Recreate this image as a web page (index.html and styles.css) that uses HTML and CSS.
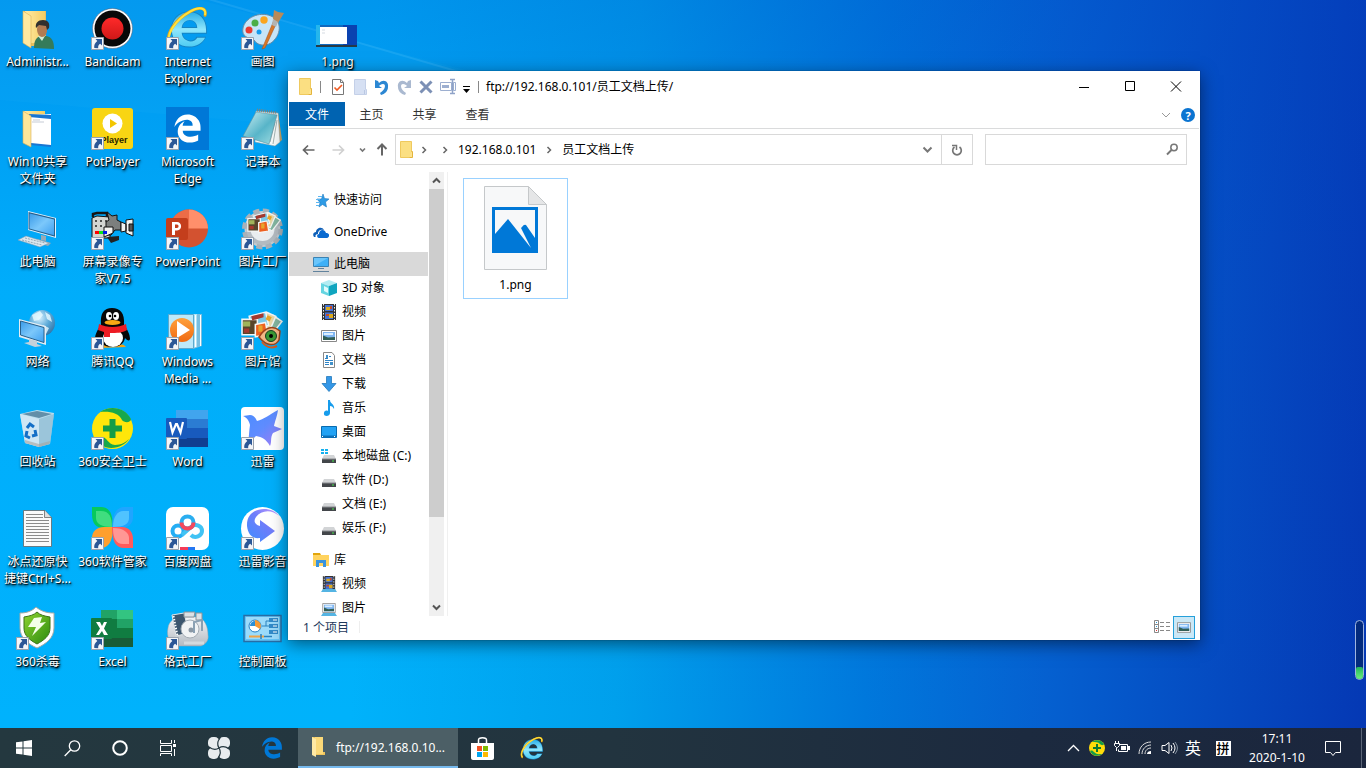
FILE: index.html
```html
<!DOCTYPE html>
<html lang="zh-CN">
<head>
<meta charset="utf-8">
<meta name="viewport" content="width=device-width, initial-scale=1">
<title>ftp://192.168.0.101/员工文档上传/</title>
<link rel="stylesheet" href="styles.css">
</head>
<body>
<svg class="defs" aria-hidden="true">
  <defs>
    <linearGradient id="gFolder" x1="0" x2="1"><stop offset="0" stop-color="#ffeaa4"/><stop offset="1" stop-color="#f5cd62"/></linearGradient>
    <linearGradient id="gRed" x1="0" y1="0" x2="0" y2="1"><stop offset="0" stop-color="#ff2a2a"/><stop offset="1" stop-color="#cf1818"/></linearGradient>
    <linearGradient id="gIe" x1="0" y1="0" x2="0" y2="1"><stop offset="0" stop-color="#2cb0e8"/><stop offset=".5" stop-color="#8fe6fc"/><stop offset="1" stop-color="#4fcdf3"/></linearGradient>
    <linearGradient id="gScreen" x1="0" y1="0" x2="1" y2="1"><stop offset="0" stop-color="#3a9be8"/><stop offset=".5" stop-color="#7cc8fb"/><stop offset="1" stop-color="#3d9ff0"/></linearGradient>
    <linearGradient id="gPad" x1="0" y1="0" x2="1" y2="1"><stop offset="0" stop-color="#cdeff3"/><stop offset=".55" stop-color="#58b5c9"/><stop offset="1" stop-color="#a5e0e5"/></linearGradient>
    <linearGradient id="gBird" x1="0" y1="0" x2="1" y2="1"><stop offset="0" stop-color="#4a8dff"/><stop offset=".5" stop-color="#5f8cff"/><stop offset="1" stop-color="#a77bf5"/></linearGradient>
    <linearGradient id="gPlay" x1="1" y1="0" x2="0" y2="1"><stop offset="0" stop-color="#c79bff"/><stop offset=".45" stop-color="#6f7dfa"/><stop offset="1" stop-color="#3d8dff"/></linearGradient>
    <linearGradient id="gOrange" x1="0" y1="0" x2="0" y2="1"><stop offset="0" stop-color="#ffa13c"/><stop offset="1" stop-color="#f06a12"/></linearGradient>
    <linearGradient id="gSilver" x1="0" y1="0" x2="0" y2="1"><stop offset="0" stop-color="#f5f6f8"/><stop offset="1" stop-color="#b3bac2"/></linearGradient>
    <linearGradient id="gGreen" x1="0" y1="0" x2="1" y2="1"><stop offset="0" stop-color="#8fd42e"/><stop offset="1" stop-color="#2b8a10"/></linearGradient>
    <radialGradient id="gGlobe" cx=".4" cy=".3" r=".8"><stop offset="0" stop-color="#d9f2ff"/><stop offset=".5" stop-color="#5aa9d8"/><stop offset="1" stop-color="#2a6a9e"/></radialGradient>
    <symbol id="link" viewBox="0 0 13 13"><path fill="#f4f6f9" stroke="#9aa3ae" d="M.5.5h12v12H.5z"/><path fill="#2b5797" d="M4.500 2H11v6.500L9.200 6.800C7.600 7.600 7 9 7.200 11.300L3.300 11C2.800 8 4 5.800 6.300 4z"/></symbol>
    <symbol id="edge" viewBox="0 0 512 512"><path d="M486.286 243.671c0-44.032-7.754-84.465-28.801-122.405C416.498 47.879 343.912 8.001 258.893 8.001 118.962 7.724 40.617 113.214 26.056 227.679c42.429-61.312 117.073-121.376 220.375-124.966 0 0 109.666 0 99.419 104.957H169.997c6.369-37.386 18.554-58.986 34.339-78.926-75.048 34.893-121.85 96.096-120.742 188.315.83 71.448 50.124 144.836 120.743 171.976 83.357 31.847 192.776 7.2 240.132-21.324V363.307c-80.864 56.494-270.871 60.925-272.255-67.572h314.073z"/></symbol>
    <symbol id="ie" viewBox="0 0 44 42"><path fill="#1684c4" fill-rule="evenodd" d="M24 5c11 0 18 8 18 20v3H17c1 8 12 9 14 3h10c-3 7-9 11-17 11C12 42 5 34 5 24S12 5 24 5zm-7 16h14c0-9-13-9-14 0z"/><path fill="url(#gIe)" fill-rule="evenodd" d="M24 6c10 0 17 7 17 18v3H16c1 10 13 11 16 5h8c-3 6-9 9-16 9C13 41 6 34 6 24S13 6 24 6zm-8 16h16c0-11-15-11-16 0z"/><path fill="none" stroke="#e7a716" stroke-width="3" stroke-linecap="round" d="M4 38C-1 30 8 14 25 5c9-5 17-4 15 4"/><path fill="none" stroke="#ffe23d" stroke-width="2" stroke-linecap="round" d="M4 37C0 29 9 14 25 5c9-5 16-4 15 3"/></symbol>
    <symbol id="folder" viewBox="0 0 16 18"><path fill="#fbdf82" stroke="#efc95e" d="M1.500.5h11v16h-11z"/><path fill="#fde391" stroke="#e4b53c" d="M12.500 10.500h1v6h-3"/></symbol>
    <symbol id="photos" viewBox="0 0 42 30"><g stroke="#f4f6f5" stroke-width="1.500"><path fill="#83b5a0" d="M31 5l9 6-10 13-9-6z"/><path fill="#e9d7a5" d="M25 2l9 4-6 14-10-4z"/><path fill="#7ac9e8" d="M8 6l16-4 3 13-16 4z"/><path fill="#57452b" d="M1 9h15v15H1z"/><path fill="#ee6121" d="M14 14l10-2 2 12-12 2z"/></g><path fill="#9fb45b" d="M2 11h7v5H2z"/><path fill="#e5a52d" d="M17 15h4v6h-4zM26 5l4 2-2 4-4-2z"/><path fill="#a5382e" d="M10 6l12-3v4l-11 3zM3 18h5v4H3z"/></symbol>
    <symbol id="thumb" viewBox="0 0 16 12"><path fill="#fff" stroke="#888" d="M.5.5h15v11H.5z"/><path fill="#7fb6f2" d="M2 2h12v8H2z"/><path fill="#dbeeff" d="M3 3h9v2H3z"/><path fill="#325f56" d="M2 5.500l5 2 7-.5v3H2z"/></symbol>
    <symbol id="film" viewBox="0 0 16 16"><path fill="#333" d="M1 0h14v16H1z"/><path fill="#4272d7" d="M4 1h8v6H4zM4 8.500h8V15H4z"/><path fill="#dba91c" d="M5 3h4v3H5zM8 10h4v4H8z"/><path fill="#c44b26" d="M9 2h2v3H9zM5 10h3v2H5z"/><path stroke="#eee" stroke-dasharray="1.500 1.500" d="M2.500 0v16M13.500 0v16"/></symbol>
    <symbol id="drive" viewBox="0 0 16 16"><path fill="#d2d4d6" d="M3 7h10l2 4H1z"/><path fill="#43464a" d="M1 11h14v4H1z"/><path fill="#888b8e" d="M1 10.500h14v1H1z"/><path fill="#45e64b" d="M11 12.500h2v1h-2z"/></symbol>
  </defs>
</svg>

<main class="desktop">
  <svg class="beams" viewBox="0 0 1366 728" preserveAspectRatio="none" aria-hidden="true">
    <path fill="#4ac4ff" opacity=".06" d="M0 0h200L700 132V160L0 100z"/>
    <path fill="none" stroke="#7ed6ff" opacity=".16" stroke-width="2" d="M205-2L480 78"/>
  </svg>

  <div class="shortcuts">
    <button class="shortcut"><svg viewBox="0 0 75 53"><path fill="#e8bf60" d="M23 11h23v35H27z"/><path fill="url(#gFolder)" d="M25 11h20v32H31z"/><path fill="#ffe9a0" stroke="#dcae52" stroke-width=".6" d="M23 11l8 5v32l-8-5z"/><path fill="#357b5a" d="M34 48c0-7 2-11 7-12h5c6 1 8 5 8 13z"/><path fill="#d5ecd5" d="M38 36l4 5 3-5z"/><path fill="#b17b52" d="M38 23h9v7c0 4-2 7-5 7s-5-4-5-8z"/><path fill="#30302f" d="M36 28c-1-5 2-8 7-8 5 0 7 3 6 8l-2 2-1-4-7-1z"/></svg><span>Administr...</span></button>
    <button class="shortcut"><svg viewBox="0 0 75 53"><path fill="url(#gFolder)" d="M24 11h21v34H28z"/><path fill="#fff" d="M29 15l22-1v32l-20-2z"/><path fill="#1976d2" d="M29 14l22 1v4l-22-2zM31 43l20 2v2l-20-2z"/><path stroke="#c5cbd5" d="M32 22h12M33 20h7"/><path fill="#fee69a" stroke="#d9ae54" stroke-width=".6" d="M23 11l8 5v31l-8-4z"/></svg><span>Win10共享<br>文件夹</span></button>
    <button class="shortcut"><svg viewBox="0 0 75 53"><path fill="#e9f5ff" d="M28 11l28 7v20l-28-8z"/><path fill="#27618d" d="M28.500 12L55 18.500v18.300l-26.500-7.500z"/><path fill="url(#gScreen)" d="M29.500 13.500l24.500 6v15.800L29.500 28.500z"/><path fill="#99aab6" d="M41 35l5 1v5l-5-1zM37 39l14 4-3 3-13-4z"/><path fill="#dbe7ef" stroke="#8299aa" stroke-width=".5" d="M18 40l8-4 23 7-9 4z"/><path stroke="#94a7b5" stroke-dasharray="2 1" d="M22 40l20 5M25 38l20 5"/></svg><span>此电脑</span></button>
    <button class="shortcut"><svg viewBox="0 0 75 53"><circle cx="42" cy="23" r="13" fill="url(#gGlobe)"/><path fill="#e9faff" opacity=".8" d="M32 15l8-4 3 4-4 5-5 1zM45 12l5 3 2 7-5-3zM43 25l6 3-3 6-4-3z"/><path fill="#e0edf5" d="M19 19l27 7v19l-27-8z"/><path fill="url(#gScreen)" stroke="#27618d" d="M20.500 21L44 27.500v15L20.500 35z"/><path fill="#c4d1da" d="M29 39l8 2v3l5 2-7 1-11-4 5-1z"/></svg><span>网络</span></button>
    <button class="shortcut"><svg viewBox="0 0 75 53"><path fill="#bcdded" d="M20 14l17-4 17 3-4 31-11 3-14-4z"/><path fill="#638fa9" d="M22 14l15-3 15 3-13 4z"/><path fill="#d3e9f5" opacity=".8" d="M20 14l19 5v28l-14-4z"/><path fill="#8dbbd2" opacity=".7" d="M39 19l15-5-4 30-11 3z"/><path fill="#a9a49c" opacity=".6" d="M25 40l14 4 11-3-.5 3L39 47l-14-4z"/><path fill="none" stroke="#146fc7" stroke-width="3" d="M27 28l3-4 4 3M27 31l-1 5 4 2M32 36l4-1-1-5"/></svg><span>回收站</span></button>
    <button class="shortcut"><svg viewBox="0 0 75 53"><path fill="#fafafa" stroke="#5f6468" stroke-width=".8" d="M23.500 10.500H45l6.500 7v29h-28z"/><path fill="#ddd" stroke="#555" stroke-width=".7" d="M44.500 10.500v7h7"/><path stroke="#8b8b8b" d="M26 14.500h17M26 17.500h17M26 20.500h23M26 23.500h23M26 26.500h23M26 29.500h23M26 32.500h23M26 35.500h23M26 38.500h23M26 41.500h23"/></svg><span>冰点还原快<br>捷键Ctrl+S...</span></button>
    <button class="shortcut"><svg viewBox="0 0 75 53"><path fill="#fff" stroke="#a5aaa5" d="M36 7c5 4 10 6 18 6v15c0 10-8 16-17 20-9-4-17-10-17-20V13c7 0 12-2 16-6z"/><path fill="url(#gGreen)" stroke="#3a7315" d="M37 12c3 3 7 4 13 5v11c0 8-6 12-13 16-7-4-13-8-13-16V17c6-1 10-2 13-5z"/><path fill="#f4ffe9" d="M34 18l8-1-2 6 6-1-14 14 4-9h-8z"/><use href="#link" x="16" y="37" width="13" height="13"/></svg><span>360杀毒</span></button>

    <button class="shortcut"><svg viewBox="0 0 75 53"><circle cx="37.500" cy="28.500" r="20" fill="#fff" stroke="#556" stroke-width=".5"/><circle cx="37.500" cy="28.500" r="18" fill="#080808"/><circle cx="37.500" cy="28.500" r="11" fill="url(#gRed)"/><use href="#link" x="16" y="37" width="13" height="13"/></svg><span>Bandicam</span></button>
    <button class="shortcut"><svg viewBox="0 0 75 53"><rect x="17" y="8" width="41" height="41" rx="3" fill="#f8d513"/><circle cx="37.500" cy="23.500" r="10" fill="#fff"/><path fill="#f3c600" d="M35 19l7 4.500-7 4.500z"/><text x="39" y="43" text-anchor="middle" class="player">Player</text><use href="#link" x="16" y="37" width="13" height="13"/></svg><span>PotPlayer</span></button>
    <button class="shortcut"><svg viewBox="0 0 75 53"><path fill="none" stroke="#151515" stroke-width="2.500" d="M18 17v-3l4-1h10v6"/><path fill="#d3d5d2" stroke="#111" d="M17 18l5-2 13 1v21H17z"/><path fill="#7c7f7e" stroke="#111" d="M32 12l5 4 5-1v5l4 2v8h-6l-4 5h-5V22l3-2z"/><path fill="#f3f3f1" stroke="#111" d="M29 27h9v6l-9 4zM46 22l5 2v7l-5 1zM51 20l7-1v17l-7-3z"/><path fill="#555" stroke="#111" d="M54 24h4v7h-4z"/><path fill="#222" d="M32 37l12-1v4l-8 3z"/><path stroke="#252525" stroke-width="1.500" stroke-dasharray="2 3" d="M20 21h13M20 26h10"/><path fill="#f00" d="M20 31h4v3h-4z"/><path fill="#09e31e" d="M24 31h4v3h-4z"/><path fill="#0019e8" d="M28 31h4v3h-4z"/><use href="#link" x="16" y="37" width="13" height="13"/></svg><span>屏幕录像专<br>家V7.5</span></button>
    <button class="shortcut"><svg viewBox="0 0 75 53"><path fill="#f6a313" d="M24 48c4-5 10-3 13-1 4-3 11-4 14 0z"/><path fill="#080808" d="M26 25C25 13 29 8 37 8s13 5 12 17c3 4 6 9 6 14-1 3-3 1-5-1-1 6-6 9-13 9s-11-3-13-8c-1 2-3 3-4 0 0-5 3-10 6-14z"/><ellipse cx="38" cy="38" rx="10" ry="9" fill="#fff"/><ellipse cx="34" cy="16" rx="3" ry="4" fill="#fff"/><ellipse cx="41" cy="16" rx="3" ry="4" fill="#fff"/><circle cx="35" cy="16" r="1.300"/><circle cx="40" cy="16" r="1.300"/><ellipse cx="37.500" cy="22.500" rx="8" ry="2.500" fill="#f8a814"/><path fill="#ed1c24" d="M24 24c8 4 19 4 27 0l1 6c-5 3-10 3-17 3v4h-6v-5l-6-2z"/><use href="#link" x="16" y="37" width="13" height="13"/></svg><span>腾讯QQ</span></button>
    <button class="shortcut"><svg viewBox="0 0 75 53"><circle cx="37.500" cy="28.500" r="20.500" fill="#ffe60a"/><path fill="#17a84c" d="M25 12C35 5 50 7 56 19c0 4-7 4-9 1-3-7-12-9-22-8zM18 35c1 4 6 4 8 2 6-1 6 7 14 8 6 0 11-3 14-6-6 10-28 15-36-4z"/><path fill="#159d46" d="M34.500 19h6v6.500H47v6h-6.500V38h-6v-6.500H28v-6h6.500z"/><use href="#link" x="16" y="37" width="13" height="13"/></svg><span>360安全卫士</span></button>
    <button class="shortcut"><svg viewBox="0 0 75 53"><path fill="#07c95c" d="M17 7h9c8 0 12 6 12 21H28c-7 0-11-5-11-14z"/><path fill="#1fa5ff" d="M58 7v10c0 7-5 11-12 11h-9c0-14 5-21 12-21z"/><path fill="#ff9f2e" d="M17 48V38c0-7 5-11 12-11h9c0 15-5 21-12 21z"/><path fill="#ff5a5c" d="M58 48h-9c-8 0-12-6-12-21h10c7 0 11 5 11 12z"/><path fill="#4fe288" opacity=".8" d="M21 11h5c8 0 11 6 11 16-10 0-16-3-16-9z"/><path fill="#5ccbff" opacity=".8" d="M54 11v7c0 6-5 9-16 9 0-11 5-16 10-16z"/><path fill="#ffa6a4" opacity=".8" d="M54 44h-6c-7 0-10-6-10-16 11 0 16 5 16 10z"/><use href="#link" x="16" y="37" width="13" height="13"/></svg><span>360软件管家</span></button>
    <button class="shortcut"><svg viewBox="0 0 75 53"><path fill="#107c41" d="M26 10h32v37H26z"/><path fill="#21a366" d="M26 10h16v9H26z"/><path fill="#33c481" d="M42 10h16v9H42z"/><path fill="#185c37" d="M26 38h32v9H26z"/><path fill="#21a366" d="M42 19h16v9H42z"/><rect x="16" y="18" width="21" height="21" rx="1" fill="#107c41"/><path fill="#fff" d="M21 22h4l2 4 2-4h3l-3 6.500 4 6.500h-4l-2-4-3 4h-3l4-6.500z"/><use href="#link" x="16" y="37" width="13" height="13"/></svg><span>Excel</span></button>

    <button class="shortcut"><svg viewBox="0 0 75 53"><use href="#ie" x="16" y="6" width="43" height="42"/><use href="#link" x="16" y="37" width="13" height="13"/></svg><span>Internet<br>Explorer</span></button>
    <button class="shortcut"><svg viewBox="0 0 75 53"><path fill="#0078d7" d="M16 7h43v43H16z"/><use href="#edge" x="23" y="14" width="29" height="29" fill="#fff"/><use href="#link" x="16" y="37" width="13" height="13"/></svg><span>Microsoft<br>Edge</span></button>
    <button class="shortcut"><svg viewBox="0 0 75 53"><circle cx="39" cy="28.500" r="19" fill="#d35230"/><path fill="#ed6c47" d="M39 28.500V9.500a19 19 0 0 0-19 19z"/><path fill="#ff8f6b" d="M39 28.500V9.500a19 19 0 0 1 19 19z"/><rect x="16" y="18" width="22" height="22" rx="2" fill="#c43e1c"/><path fill="#fff" fill-rule="evenodd" d="M22 22h5c5 0 6 8 0 8.500h-2V35h-3zm3 2.500V28h2c2 0 2-3.500 0-3.500z"/><use href="#link" x="16" y="37" width="13" height="13"/></svg><span>PowerPoint</span></button>
    <button class="shortcut"><svg viewBox="0 0 75 53"><path fill="#79bee0" d="M43 14h9v32l-9 3z"/><path fill="#afe2f6" d="M39 14h8v33l-8 2z"/><path stroke="#fff" d="M45.500 15v32M50.500 15v31"/><path fill="#bde9fa" stroke="#5ea9cd" d="M18.500 14.500h25v34h-25z"/><circle cx="32" cy="30" r="12" fill="url(#gOrange)"/><path fill="#fff" d="M27 21l13 9-13 8z"/><use href="#link" x="16" y="37" width="13" height="13"/></svg><span>Windows<br>Media ...</span></button>
    <button class="shortcut"><svg viewBox="0 0 75 53"><path fill="#41a5ee" d="M26 10h32v9H26z"/><path fill="#2b7cd3" d="M26 19h32v9H26z"/><path fill="#185abd" d="M26 28h32v10H26z"/><path fill="#103f91" d="M26 38h32v9H26z"/><rect x="16" y="18" width="21" height="21" rx="1" fill="#185abd"/><path fill="none" stroke="#fff" stroke-width="2.200" d="M20 22l2.500 10.500L26 24h1l3.500 8.500L33 22"/><use href="#link" x="16" y="37" width="13" height="13"/></svg><span>Word</span></button>
    <button class="shortcut"><svg viewBox="0 0 75 53"><rect x="16" y="7" width="43" height="43" rx="7" fill="#fff"/><g fill="none" stroke-width="4"><circle cx="28" cy="31" r="5.500" stroke="#25aef4"/><path stroke="#41c3f4" d="M32 35l9-8c5-4 11-1 11 4s-7 8-11 4"/><circle cx="37.500" cy="22.500" r="6" stroke="#2aaef0"/><path stroke="#f4485d" d="M31.500 22.500c0 8 12 8 12 0"/></g><path fill="#2477f2" d="M38 47h7v3h-7z"/><path fill="#f43b58" d="M30 47h8v3h-8z"/><use href="#link" x="16" y="37" width="13" height="13"/></svg><span>百度网盘</span></button>
    <button class="shortcut"><svg viewBox="0 0 75 53"><path fill="url(#gSilver)" stroke="#9aa2a9" stroke-width=".5" d="M18 28c1-7 6-10 13-11h17c7 2 10 10 10 18 1 5-2 9-7 11H26c-6-3-10-9-8-18z"/><path fill="#3c566e" stroke="#e1e6e9" d="M22 15l12-2 5 20-13 3z"/><path stroke="#fff" stroke-width="2" stroke-dasharray="1.500 1.500" d="M23.500 16l4 20"/><path fill="#dce1e5" stroke="#8a9299" d="M34 12h11l-1 5H34zM46 13h6v7h-6z"/><circle cx="40" cy="29" r="9" fill="#f1f3f5" stroke="#a5adb5"/><circle cx="41" cy="30" r="2.500" fill="#8b98a5"/><path fill="none" stroke="#8aa0b3" stroke-width="2" d="M44 33V22l8-2v11"/><path fill="none" stroke="#d4d9dd" stroke-width="3" d="M34 43h20"/><use href="#link" x="16" y="37" width="13" height="13"/></svg><span>格式工厂</span></button>

    <button class="shortcut"><svg viewBox="0 0 75 53"><path fill="#c7e5f8" stroke="#658aa5" d="M18 28c2-10 16-17 28-12 12 5 10 20 0 27-7 4-14 2-17-3-5-2-13-3-11-12z"/><circle cx="24" cy="30" r="3.500" fill="#ea3b32"/><circle cx="30" cy="23" r="3.500" fill="#4cae48"/><circle cx="39" cy="20" r="3.700" fill="#fba51f"/><circle cx="34" cy="32" r="2.500" fill="#149bed"/><path fill="#d7782a" stroke="#a74e19" stroke-width=".5" d="M49 20l3 2-12 26-3 1z"/><path fill="#b98a58" d="M49 10l4 2 6 1-6 10-5-4z"/><path fill="#b2b4b3" d="M48 19l5 3-2 5-4-2z"/><use href="#link" x="16" y="37" width="13" height="13"/></svg><span>画图</span></button>
    <button class="shortcut"><svg viewBox="0 0 75 53"><path fill="#c9a564" d="M53 12l4 28-6 5z"/><path fill="#f8fbfa" stroke="#8fa1a3" stroke-width=".5" d="M31 11l22 2 2 29-5 4-20-4z"/><path stroke="#a6b4b4" d="M50 22l-5 20M52 20l-4 24"/><path fill="url(#gPad)" stroke="#5792a1" stroke-width=".6" d="M31 12l21 3-8 29-26-8z"/><path stroke="#778483" stroke-width="3" stroke-dasharray="1 1" d="M32 10l20 3"/><use href="#link" x="16" y="37" width="13" height="13"/></svg><span>记事本</span></button>
    <button class="shortcut"><svg viewBox="0 0 75 53"><circle cx="37.500" cy="29" r="18" fill="#c5cbd0" stroke="#a9b1b8" stroke-width="5" stroke-dasharray="6 3.400"/><circle cx="37.500" cy="29" r="14" fill="#e9edef" stroke="#b4bbc1" stroke-width="4"/><use href="#photos" x="22" y="9" width="35" height="29"/><use href="#link" x="16" y="37" width="13" height="13"/></svg><span>图片工厂</span></button>
    <button class="shortcut"><svg viewBox="0 0 75 53"><use href="#photos" x="16" y="10" width="43" height="31"/><path fill="#f4b886" stroke="#9e431c" stroke-width="1.500" d="M34 37c6-10 14-12 21-6l-1 9c-4 7-13 6-20-3z"/><circle cx="46" cy="36" r="5.500" fill="#3b9a36" stroke="#173f20"/><circle cx="46" cy="36" r="2"/><path fill="none" stroke="#d55c20" stroke-width="2" d="M37 42c4 5 9 7 15 4"/><use href="#link" x="16" y="37" width="13" height="13"/></svg><span>图片馆</span></button>
    <button class="shortcut"><svg viewBox="0 0 75 53"><rect x="16" y="7" width="43" height="43" rx="4" fill="#fff"/><path fill="url(#gBird)" d="M18 16l7-1c3 0 5 2 7 6 7-2 12-6 21-11-1 7-3 11-4 16l8 3-9 4c-3 5-1 9-3 13-4-7-8-9-14-10-4 3-4 8-8 9 1-8 1-14 2-20-1-5-4-8-7-9z"/><use href="#link" x="16" y="37" width="13" height="13"/></svg><span>迅雷</span></button>
    <button class="shortcut"><svg viewBox="0 0 75 53"><circle cx="37.500" cy="28.500" r="21.500" fill="#fff"/><path fill="url(#gPlay)" d="M54 16C47 5 21 6 22 26c1 9 6 13 13 12v4l15-11-15-11v6c-5-1-7-5-4-9 5-7 16-8 23-1z"/><use href="#link" x="16" y="37" width="13" height="13"/></svg><span>迅雷影音</span></button>
    <button class="shortcut"><svg viewBox="0 0 75 53"><path fill="#65c4f7" stroke="#286da5" stroke-width="1.500" d="M19 15.500h37v26H19z"/><path fill="#9bdbfb" d="M21 17h33v22H21z"/><circle cx="30" cy="26" r="6" fill="#fff" stroke="#247fc5"/><path fill="#2b8fd8" d="M30 26h-5a5 5 0 0 1 5-5z"/><path fill="#f69a35" d="M30 26v-6a6 6 0 0 1 5 9z"/><path fill="none" stroke="#2c83be" d="M37 26h4v-5h3M41 26h3"/><path fill="#328bc9" d="M44 18h9v4h-9zM44 24h9v4h-9zM44 30h9v4h-9z"/><path stroke="#fff" d="M48 20h4M48 26h4M48 32h4"/><path stroke="#f0a345" stroke-width="2" d="M24 36.500h15"/><path stroke="#2c83be" stroke-width="1.500" d="M39 36.500h8M36 34v5"/></svg><span>控制面板</span></button>

    <button class="shortcut"><svg viewBox="0 0 75 53"><path fill="#1169bd" d="M16 25h41v22H16z"/><path fill="#0a42b0" d="M43 25h14v20H43z"/><path fill="#25b6ec" d="M16 25h4v20h-4z"/><path fill="#fff" d="M20 27h27v17H20z"/><path fill="#273a47" d="M16 45h41v2H16z"/><path stroke="#d5dbe2" d="M22 30h3M22 33h3"/></svg><span>1.png</span></button>
  </div>

  <div class="meter" aria-hidden="true"><i></i></div>

  <section class="window" aria-label="文件资源管理器">
    <header class="titlebar">
      <svg class="i16x18"><use href="#folder"/></svg>
      <i class="sep"></i>
      <div class="quick">
        <button aria-label="属性"><svg class="i16x18" viewBox="0 0 16 18"><path fill="#fff" stroke="#777" d="M2.500 1.500H11l2.500 3v12h-11z"/><path fill="none" stroke="#777" d="M10.500 1.500v3h3"/><path fill="none" stroke="#f05a22" stroke-width="1.600" d="M4.500 9.500l2.500 2.500L12 7"/></svg></button>
        <button aria-label="新建文件夹"><svg class="i16x18" viewBox="0 0 16 18"><path fill="#d6e0f3" stroke="#c4d0e8" d="M2.500 1.500h11v10h1v5h-12z"/><path fill="none" stroke="#b9c7e2" d="M12.500 12v4"/></svg></button>
        <button aria-label="撤消"><svg class="i16x18" viewBox="0 0 16 18"><path fill="#2c87d3" d="M1 2l3 1 1 2c5-5 10-1 9 4 0 4-3 7-7 8l-1-2c6-4 6-9 3-9-2 0-3 1-4 2l3 2H1z"/></svg></button>
        <button aria-label="恢复"><svg class="i16x18" viewBox="0 0 16 18"><path fill="#aab9d0" d="M15 2l-3 1-1 2C6 0 1 4 2 9c0 4 3 7 7 8l1-2C4 11 4 6 7 6c2 0 3 1 4 2l-3 2h7z"/></svg></button>
        <button aria-label="删除"><svg class="i16x18" viewBox="0 0 16 18"><path stroke="#7c90b5" stroke-width="3" d="M2.500 3.500l11 11M13.500 3.500l-11 11"/></svg></button>
        <button aria-label="重命名"><svg class="i16x18" viewBox="0 0 16 18"><path fill="#fff" stroke="#9dafd0" d="M.5 4.500h11v8H.5zM13.500 4.500h2v8h-2z"/><path fill="#9dafd0" d="M2 7h7v3H2z"/><path stroke="#8fa3c8" stroke-width="1.500" d="M12.500 2v13M10 1.500h5M10 15.500h5"/></svg></button>
        <button aria-label="自定义快速访问工具栏"><svg width="9" height="18" viewBox="0 0 9 18"><path d="M1 8h7v1H1zM1 11h7l-3.500 4z"/></svg></button>
      </div>
      <i class="sep"></i>
      <h1>ftp://192.168.0.101/员工文档上传/</h1>
      <div class="controls">
        <button aria-label="最小化"><svg viewBox="0 0 12 12"><path stroke="#000" d="M1 6.500h10"/></svg></button>
        <button aria-label="最大化"><svg viewBox="0 0 12 12"><path fill="none" stroke="#000" d="M1.500.5h9v9h-9z"/></svg></button>
        <button aria-label="关闭"><svg viewBox="0 0 12 12"><path stroke="#000" d="M1 .5l10 10M11 .5l-10 10"/></svg></button>
      </div>
    </header>

    <nav class="tabs">
      <button class="file">文件</button>
      <button>主页</button>
      <button>共享</button>
      <button>查看</button>
      <div class="help">
        <button aria-label="展开功能区"><svg width="10" height="10" viewBox="0 0 10 10"><path fill="none" stroke="#999" d="M1 3l4 4 4-4"/></svg></button>
        <button class="question" aria-label="帮助">?</button>
      </div>
    </nav>

    <div class="navbar">
      <div class="arrows">
        <button aria-label="后退"><svg width="13" height="12" viewBox="0 0 13 12"><path fill="none" stroke="#666" stroke-width="1.700" d="M12.500 6H1.500M6 1.500L1.500 6 6 10.500"/></svg></button>
        <button aria-label="前进"><svg width="13" height="12" viewBox="0 0 13 12"><path fill="none" stroke="#d0d0d0" stroke-width="1.700" d="M.5 6h11M7 1.500L11.500 6 7 10.500"/></svg></button>
        <button class="small" aria-label="最近"><svg width="7" height="6" viewBox="0 0 7 6"><path fill="none" stroke="#777" stroke-width="1.700" d="M1 1.500L3.500 4 6 1.500"/></svg></button>
        <button class="small" aria-label="上移"><svg width="12" height="13" viewBox="0 0 12 13"><path fill="none" stroke="#666" stroke-width="2" d="M6 12.500V2M1.500 6L6 1.500 10.500 6"/></svg></button>
      </div>
      <div class="address">
        <svg class="i16x18"><use href="#folder"/></svg>
        <svg class="crumb" viewBox="0 0 6 8"><path d="M1.500 1l3 3-3 3"/></svg>
        <svg class="crumb second" viewBox="0 0 6 8"><path d="M1.500 1l3 3-3 3"/></svg>
        <a href="#host">192.168.0.101</a>
        <svg class="crumb" viewBox="0 0 6 8"><path d="M1.500 1l3 3-3 3"/></svg>
        <a href="#folder">员工文档上传</a>
        <button class="history" aria-label="以前的位置"><svg width="11" height="8" viewBox="0 0 11 8"><path fill="none" stroke="#777" stroke-width="2" d="M1.500 1.500l4 4 4-4"/></svg></button>
        <button class="refresh" aria-label="刷新"><svg width="12" height="14" viewBox="0 0 12 14"><path fill="none" stroke="#777" stroke-width="1.700" d="M8.500 4a4.300 4.300 0 1 1-5 0"/><path fill="none" stroke="#777" stroke-width="1.500" d="M1 2.500h4.500V7"/></svg></button>
      </div>
      <label class="search">
        <input type="text" aria-label="搜索">
        <svg width="13" height="13" viewBox="0 0 13 13"><circle cx="8" cy="4.500" r="3.200" fill="none" stroke="#777" stroke-width="1.500"/><path stroke="#777" stroke-width="2" d="M5.500 7L1 11.500"/></svg>
      </label>
    </div>

    <div class="body">
      <aside class="tree">
        <ul>
          <li><a href="#quick"><svg viewBox="0 0 16 16"><path fill="#2e9be5" stroke="#1e7bc2" stroke-width=".6" d="M10 2l1.500 4.500L16 7l-3.500 3 1 5-4-2.500L6 15l1-4.500L4 7h4.500z"/><path stroke="#5cb6f1" d="M5 4.500h4M3 7.500h4M3 10.500h4M3 13.500h3"/></svg>快速访问</a></li>
          <li><a href="#onedrive"><svg viewBox="0 0 16 16"><path fill="#0d5fb8" d="M1 13c-2-3 0-5 2-5 0-4 6-6 8-2-5-1-6 2-6 4-3 0-3 3-2 3z"/><path fill="#0a6ad0" d="M6 14c-3-1-2-4 0-4 0-5 6-5 7-1 4 0 4 4 1 5z"/></svg>OneDrive</a></li>
          <li><a class="current" href="#pc"><svg viewBox="0 0 16 16"><path fill="#69c5fb" stroke="#3a82b3" d="M.5 1.500h15v9H.5z"/><path fill="#3eb0f7" d="M1 10L15 2v8z"/><path stroke="#62839d" d="M5 12.500h6M0 15.500h16"/></svg>此电脑</a>
            <ul>
              <li><a href="#3d"><svg viewBox="0 0 16 16"><path fill="#b3ecf2" d="M8 0l8 3-8 3-8-3z"/><path fill="#66d5e1" d="M0 3l8 3v10l-8-3z"/><path fill="#10a5bf" d="M16 3L8 6v10l8-3z"/><path fill="#e2fbfc" d="M3 6l4 2v5l-4-2z"/></svg>3D 对象</a></li>
              <li><a href="#video"><svg><use href="#film"/></svg>视频</a></li>
              <li><a href="#pictures"><svg><use href="#thumb" y="2" width="16" height="12"/></svg>图片</a></li>
              <li><a href="#documents"><svg viewBox="0 0 16 16"><path fill="#fff" stroke="#888" d="M2.500.5H11l2.500 3v12h-11z"/><path stroke="#2e83c5" d="M4 6.500h3M8 4.500h2M4 8.500h8M4 10.500h4M4 12.500h4"/><path fill="#4291c9" d="M9 10h3v3H9zM5 3h2v3H5z"/></svg>文档</a></li>
              <li><a href="#downloads"><svg viewBox="0 0 16 16"><path fill="#3497e7" stroke="#2378bb" stroke-width=".8" d="M5.500.5h5v7H15l-7 8-7-8h4.500z"/></svg>下载</a></li>
              <li><a href="#music"><svg viewBox="0 0 16 16"><path fill="#169cec" d="M7 0h2c0 4 5 4 4 9-1-2-2-3-4-3v7c0 4-7 4-6 0 0-2 2-3 4-2z"/></svg>音乐</a></li>
              <li><a href="#desktop"><svg viewBox="0 0 16 16"><path fill="#22a2f4" stroke="#086baf" d="M.5 2.500h15v11H.5z"/><path fill="#0b71ba" d="M1 11.500h14v2H1z"/><path fill="#fff" d="M1 12h1v1H1zM13 12h1v1h-1z"/></svg>桌面</a></li>
              <li><a href="#c"><svg viewBox="0 0 16 16"><use href="#drive"/><path fill="#14b1ef" d="M0 1h3v2H0zM4 1h3v2H4zM0 4h3v2H0zM4 4h3v2H4z"/></svg>本地磁盘 (C:)</a></li>
              <li><a href="#d"><svg><use href="#drive"/></svg>软件 (D:)</a></li>
              <li><a href="#e"><svg><use href="#drive"/></svg>文档 (E:)</a></li>
              <li><a href="#f"><svg><use href="#drive"/></svg>娱乐 (F:)</a></li>
            </ul>
          </li>
          <li><a href="#libraries"><svg viewBox="0 0 16 16"><path fill="#e2a50b" d="M0 1h7l1 2H0z"/><path fill="#ffd35e" d="M0 3h16v11H0z"/><path fill="#3993dd" d="M3 8h10v7h-3v-4H6v4H3z"/></svg>库</a>
            <ul>
              <li><a href="#lib-video"><svg viewBox="0 0 16 16"><use href="#film" x="1" width="14" height="14"/><path fill="#54b4e3" d="M2 13h12l2 3H0z"/></svg>视频</a></li>
              <li><a href="#lib-pictures"><svg viewBox="0 0 16 16"><use href="#thumb" x="1" y="3" width="14" height="10"/><path fill="#54b4e3" d="M2 13h12l2 3H0z"/></svg>图片</a></li>
            </ul>
          </li>
        </ul>
      </aside>
      <div class="scrollbar">
        <button aria-label="向上滚动"><svg width="9" height="7" viewBox="0 0 9 7"><path fill="none" stroke="#555" stroke-width="2" d="M1 5.500L4.500 2 8 5.500"/></svg></button>
        <div class="track"><i></i></div>
        <button aria-label="向下滚动"><svg width="9" height="7" viewBox="0 0 9 7"><path fill="none" stroke="#555" stroke-width="2" d="M1 1.500L4.500 5 8 1.500"/></svg></button>
      </div>
      <div class="files">
        <button class="file-tile">
          <svg width="63" height="84" viewBox="0 0 63 84"><path fill="#f7f8f9" stroke="#c5c8ca" d="M.5.5H44l18.500 18v65H.5z"/><path fill="#e5e6e7" stroke="#c5c8ca" d="M44.500.5v18h18z"/><path fill="#0078d7" d="M8 21h46v46H8z"/><path fill="#f7f8f9" d="M11 24h40v28l-9-13q-2-1-4 2l-1 1 10 20-23-29-13 15z"/></svg>
          <span>1.png</span>
        </button>
      </div>
    </div>

    <footer class="status">
      <span>1 个项目</span><i class="sep"></i>
      <div class="views">
        <button aria-label="详细信息"><svg width="16" height="14" viewBox="0 0 16 14"><path fill="none" stroke="#888" d="M.5.500h4v12h-4zM.5 4.500h4M.5 8.500h4M6 2.500h4M12 2.500h4M6 6.500h4M12 6.500h4M6 10.500h4M12 10.500h4"/><path fill="#299ad9" d="M2 2h1v1H2zM2 6h1v1H2z"/><path fill="#d33" d="M2 10h1v1H2z"/></svg></button>
        <button class="active" aria-label="大图标"><svg width="14" height="11"><use href="#thumb"/></svg></button>
      </div>
    </footer>
  </section>
</main>

<footer class="taskbar">
  <button aria-label="开始"><svg width="16" height="16" viewBox="0 0 16 16"><path fill="#fff" d="M0 2.300l6.500-.9v6H0zM7.500 1.200L16 0v7.400H7.500zM0 8.500h6.500v6.100L0 13.700zM7.500 8.500H16V16l-8.500-1.200z"/></svg></button>
  <button aria-label="搜索"><svg width="17" height="17" viewBox="0 0 17 17"><circle cx="10.500" cy="6" r="5.200" fill="none" stroke="#fff" stroke-width="1.300"/><path stroke="#fff" stroke-width="1.300" d="M6.800 9.700L.7 16"/></svg></button>
  <button aria-label="Cortana"><svg width="16" height="16" viewBox="0 0 16 16"><circle cx="8" cy="8" r="6.800" fill="none" stroke="#fff" stroke-width="2"/></svg></button>
  <button aria-label="任务视图"><svg width="17" height="16" viewBox="0 0 17 16"><path fill="none" stroke="#fff" d="M.5 0v3.500h11V0M.5 5.500h11v6H.5zM.5 16v-2.500h11V16M14.500 0v3M14.500 9v7"/><path fill="#fff" d="M13 4h3v3h-3z"/></svg></button>
  <button class="app" aria-label="360"><svg width="22" height="22" viewBox="0 0 22 22"><rect x="0" y="0" width="11.500" height="11.500" rx="5" fill="#e8ecee"/><rect x="10.500" y="0" width="11.500" height="11.500" rx="5" fill="#e8ecee"/><rect x="0" y="10.500" width="11.500" height="11.500" rx="5" fill="#e8ecee"/><rect x="10.500" y="10.500" width="11.500" height="11.500" rx="5" fill="#e8ecee"/><path fill="#e8ecee" d="M6 6h10v10H6z"/><path fill="none" stroke="#24373f" stroke-width="1.200" d="M11 11C9 8 9 5 12 1M11 11c3-2 6-2 10 1M11 11c2 3 2 6-1 10M11 11c-3 2-6 2-10-1"/></svg></button>
  <button class="app" aria-label="Microsoft Edge"><svg width="22" height="22" fill="#0078d7"><use href="#edge"/></svg></button>
  <button class="task"><svg width="16" height="22" viewBox="0 0 16 22"><path fill="#efc55d" d="M1 1h11v15h2v3H1z"/><path fill="#fbd978" d="M4 1h8v17H4z"/><path fill="#ffe9a4" d="M1 1l4 2v18l-4-2z"/></svg><span>ftp://192.168.0.10...</span></button>
  <button class="pin" aria-label="Microsoft Store"><svg width="23" height="23" viewBox="0 0 23 23"><path fill="none" stroke="#fff" stroke-width="1.500" d="M7.500 7V3c0-3 8-3 8 0v4"/><path fill="#fff" d="M0 6h23v15c0 1-1 2-2 2H2c-1 0-2-1-2-2z"/><path fill="#f25022" d="M6 9h5v5H6z"/><path fill="#7fba00" d="M12 9h5v5h-5z"/><path fill="#00a4ef" d="M6 15h5v5H6z"/><path fill="#ffb900" d="M12 15h5v5h-5z"/></svg></button>
  <button class="pin" aria-label="Internet Explorer"><svg width="24" height="24"><use href="#ie"/></svg></button>

  <div class="tray">
    <button aria-label="显示隐藏的图标"><svg width="13" height="8" viewBox="0 0 13 8"><path fill="none" stroke="#fff" stroke-width="1.300" d="M1 7l5.500-5.500L12 7"/></svg></button>
    <button aria-label="360安全卫士"><svg width="16" height="16" viewBox="0 0 16 16"><circle cx="8" cy="8" r="8" fill="#ffdc0a"/><path fill="#159d46" d="M3 2c4-3 10-2 12 2-1 2-3 1-4 0-2-2-4-2-8-2zM1 11c2-1 3 0 4 1 3 3 5 2 8 2-4 3-10 2-12-3z"/><path fill="#0c7a32" d="M7 4h2v3h3v2H9v3H7V9H4V7h3z"/></svg></button>
    <button aria-label="电池"><svg width="17" height="14" viewBox="0 0 17 14"><path fill="none" stroke="#fff" d="M7 3.500h7.500v7h-9v-2M2.500 0v2M5.500 0v2M1.500 2.500h5v2l-2 2h-1l-2-2zM3.500 7v3"/><path fill="#fff" d="M8 5h5v4H8zM15 5h2v4h-2z"/></svg></button>
    <button aria-label="网络"><svg width="14" height="14" viewBox="0 0 14 14"><g fill="none" stroke="#ddd"><path d="M1 13C1 6 6 1 13 1"/><path d="M4 13c0-5 4-9 9-9"/><path d="M7 13c0-4 3-6 6-6"/></g><path fill="#fff" d="M9 13c0-2 2-3 4-3v3z"/></svg></button>
    <button aria-label="音量"><svg width="17" height="14" viewBox="0 0 17 14"><path fill="none" stroke="#fff" d="M1 4.500h3l4-3v11l-4-3H1zM10 4q2 3 0 6M12 2q4 5 0 10"/><path fill="none" stroke="#8390a0" d="M14 1q5 6 0 12"/></svg></button>
    <button class="lang">英</button>
    <button class="ime"><span>拼</span></button>
    <time datetime="2020-01-10T17:11">17:11<br>2020-1-10</time>
    <button class="notice" aria-label="通知"><svg width="17" height="17" viewBox="0 0 17 17"><path fill="none" stroke="#fff" d="M.5 1.500h15v11h-5l-2.500 3-2.500-3h-5z"/></svg></button>
    <i class="peek"></i>
  </div>
</footer>
</body>
</html>
```
FILE: styles.css
```css
* { box-sizing: border-box; }

html, body { height: 100%; }

body {
  margin: 0;
  display: flex;
  flex-direction: column;
  overflow: hidden;
  font: 12px/17px "Noto Sans", "Noto Sans CJK SC", sans-serif;
  color: #000;
}

button {
  padding: 0;
  border: 0;
  background: none;
  color: inherit;
  font: inherit;
  display: flex;
  align-items: center;
  justify-content: center;
}

a { color: inherit; text-decoration: none; }
ul { list-style: none; margin: 0; padding: 0; }
svg { display: block; flex: none; }

.defs { position: absolute; width: 0; height: 0; }
.i16x18 { width: 16px; height: 18px; }

/* Desktop */
.desktop {
  position: relative;
  flex: 1;
  min-height: 0;
  background:
    linear-gradient(180deg, rgba(0, 70, 200, .26), rgba(0, 90, 220, .06) 40%, transparent),
    linear-gradient(92deg, #00b2fd 0%, #00b2fb 27%, #00a0ec 46%, #0078dc 64%, #0560d0 77%, #0538b4 100%);
}

.beams { position: absolute; width: 100%; height: 100%; }

.shortcuts {
  position: relative;
  height: 100%;
  display: grid;
  grid-auto-flow: column;
  grid-template-rows: repeat(7, 100px);
  grid-auto-columns: 75px;
}

.shortcut {
  flex-direction: column;
  justify-content: flex-start;
  color: #fff;
  text-align: center;
  white-space: nowrap;
  text-shadow: 1px 1px 1px #000, 1px 2px 3px #000;
}

.shortcut svg { width: 75px; height: 53px; }

.player {
  font: bold 9px "Liberation Sans", sans-serif;
  fill: #2b2500;
  text-shadow: none;
}

.meter {
  position: absolute;
  right: 2px;
  bottom: 48px;
  width: 9px;
  height: 60px;
  display: flex;
  align-items: flex-end;
  padding: 0;
  border: 1px solid #9fb4e0;
  border-radius: 5px;
  background: #032a7c;
}

.meter i {
  flex: 1;
  height: 20%;
  border-radius: 2px 2px 4px 4px;
  background: linear-gradient(#23b35d, #6bf07c);
}

/* Explorer window */
.window {
  position: absolute;
  left: 288px;
  right: 166px;
  top: 71px;
  bottom: 88px;
  display: flex;
  flex-direction: column;
  padding: 0 1px;
  background: #fff;
  box-shadow: 0 0 1px rgba(0, 0, 0, .5), 0 4px 16px rgba(0, 0, 0, .5);
}

.titlebar {
  height: 31px;
  display: flex;
  align-items: center;
  padding-left: 9px;
}

.sep { width: 1px; height: 12px; background: #888; }
.titlebar > .sep { margin: 0 9px 0 6px; }

.quick { display: flex; gap: 6px; }
.titlebar .quick + .sep { margin: 0 7px; }

.titlebar h1 { margin: 0; font: inherit; white-space: nowrap; }

.controls { display: flex; align-self: stretch; margin-left: auto; }
.controls button { width: 46px; }
.controls svg { width: 12px; height: 12px; }

.tabs {
  height: 27px;
  display: flex;
  align-items: flex-start;
  border-bottom: 1px solid #dadbdc;
  color: #333;
}

.tabs > button { width: 53px; height: 24px; }
.tabs > .file { width: 56px; background: #0063b1; color: #fff; }

.help { display: flex; align-items: center; gap: 10px; height: 26px; margin-left: auto; padding-right: 4px; }

.question {
  width: 14px;
  height: 14px;
  border-radius: 50%;
  background: #0a74d1;
  color: #fff;
  font-size: 11px;
  font-weight: 700;
}

.navbar { display: flex; padding: 5px 12px 7px 4px; }

.arrows { display: flex; align-items: center; width: 102px; }
.arrows button { width: 30px; }
.arrows .small { width: 19px; }

.address {
  flex: 1;
  min-width: 0;
  height: 31px;
  display: flex;
  align-items: center;
  padding-left: 3px;
  border: 1px solid #d9d9d9;
}

.crumb {
  width: 6px;
  height: 8px;
  margin: 0 10px;
  fill: none;
  stroke: #666;
  stroke-width: 1.5;
}

.address .i16x18 + .crumb { margin: 0 6px; }
.address .second { margin-left: 9px; }

.history { width: 28px; height: 100%; margin-left: auto; }
.refresh { width: 31px; height: 100%; border-left: 1px solid #d9d9d9; }

.search {
  width: 202px;
  margin-left: 12px;
  display: flex;
  align-items: center;
  padding-right: 7px;
  border: 1px solid #d9d9d9;
}

.search input {
  flex: 1;
  min-width: 0;
  border: 0;
  padding: 0 6px;
  outline: 0;
  background: none;
  font: inherit;
}

.body { flex: 1; min-height: 0; display: flex; }

.tree { width: 140px; padding: 16px 1px 0 0; overflow: hidden; }
.tree > ul > li { margin-bottom: 8px; }

.tree a {
  display: flex;
  align-items: center;
  gap: 5px;
  height: 24px;
  padding: 0 0 1px 24px;
  white-space: nowrap;
}

.tree ul ul a { padding-left: 32px; }
.tree .current { background: #d9d9d9; }
.tree svg { width: 16px; height: 16px; }

.scrollbar { width: 15px; display: flex; flex-direction: column; background: #f0f0f0; }
.scrollbar button { height: 17px; }
.track { flex: 1; }
.track i { display: block; height: 80%; background: #cdcdcd; }

.files {
  flex: 1;
  margin-left: 3px;
  padding: 6px 15px;
  border-left: 1px solid #f0f0f0;
}

.file-tile {
  flex-direction: column;
  justify-content: flex-start;
  gap: 6px;
  width: 105px;
  height: 121px;
  padding-top: 7px;
  border: 1px solid #99d1ff;
}

.status {
  height: 24px;
  display: flex;
  align-items: center;
  gap: 10px;
  padding: 0 4px 2px 14px;
  color: #1e395b;
}

.status .sep { background: #eee; }
.views { display: flex; align-items: center; gap: 3px; margin-left: auto; }
.active { width: 22px; height: 23px; border: 1px solid #26a0da; background: #cbe8f6; }

/* Taskbar */
.taskbar {
  height: 40px;
  display: flex;
  background: linear-gradient(90deg, #24383f, #22343f 45%, #1c2a3f 75%, #1b263d);
  color: #fff;
}

.taskbar > button { width: 48px; }
.taskbar > .app { width: 53px; }
.taskbar > .pin { width: 49px; }

.taskbar > .task {
  width: 160px;
  justify-content: flex-start;
  gap: 9px;
  padding-left: 13px;
  border-bottom: 2px solid #76b9ed;
  background: #4c5f66;
}

.tray { display: flex; align-items: center; margin-left: auto; }
.tray button { width: 24px; height: 40px; }
.tray .lang { font-size: 16px; }
.tray .ime { width: 36px; }

.ime span {
  width: 15px;
  height: 15px;
  background: #fff;
  color: #000;
  font: 500 13px/14px "Noto Sans CJK SC", sans-serif;
}

.tray time { width: 72px; text-align: center; line-height: 19px; }
.tray .notice { width: 40px; }
.peek { width: 1px; height: 40px; margin: 0 4px 0 8px; background: #5b6577; }
```
